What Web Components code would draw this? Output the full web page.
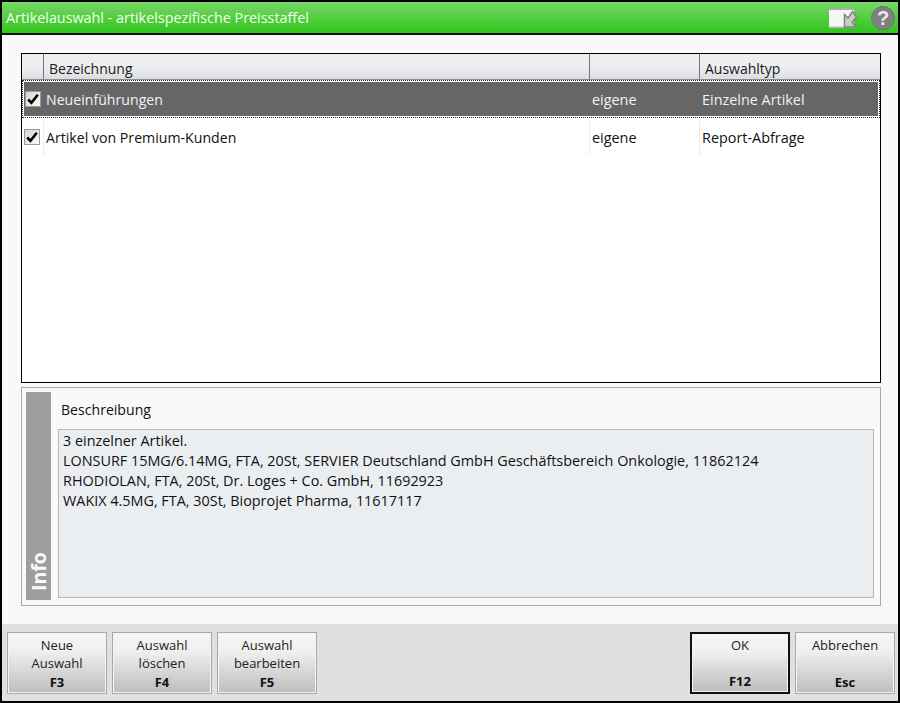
<!DOCTYPE html>
<html lang="de"><head><meta charset="utf-8"><style>
html,body{margin:0;padding:0;background:#f9f9f9}
body{font-family:"Open Sans","Noto Sans",sans-serif;width:900px;height:703px;overflow:hidden}
</style></head><body>
<app-window>
  <title-bar slot="title">Artikelauswahl - artikelspezifische Preisstaffel</title-bar>
  <select-table slot="table">
    <table-row selected name="Neueinführungen" owner="eigene" kind="Einzelne Artikel"></table-row>
    <table-row name="Artikel von Premium-Kunden" owner="eigene" kind="Report-Abfrage"></table-row>
  </select-table>
  <info-panel slot="info" heading="Beschreibung">
    <div>3 einzelner Artikel.</div>
    <div>LONSURF 15MG/6.14MG, FTA, 20St, SERVIER Deutschland GmbH Geschäftsbereich Onkologie, 11862124</div>
    <div>RHODIOLAN, FTA, 20St, Dr. Loges + Co. GmbH, 11692923</div>
    <div>WAKIX 4.5MG, FTA, 30St, Bioprojet Pharma, 11617117</div>
  </info-panel>
  <key-button slot="left" l1="Neue" l2="Auswahl" key="F3"></key-button>
  <key-button slot="left" l1="Auswahl" l2="löschen" key="F4"></key-button>
  <key-button slot="left" l1="Auswahl" l2="bearbeiten" key="F5"></key-button>
  <key-button slot="right" primary l1="OK" key="F12"></key-button>
  <key-button slot="right" l1="Abbrechen" key="Esc"></key-button>
</app-window>
<script>
function def(name,html){
  customElements.define(name,class extends HTMLElement{
    connectedCallback(){
      if(this.shadowRoot)return;
      const r=this.attachShadow({mode:'open'});
      r.innerHTML=typeof html==='function'?html(this):html;
    }
  });
}
def('app-window',`<style>
:host{display:flex;flex-direction:column;box-sizing:border-box;width:900px;height:703px;border:2px solid #000;background:#f9f9f9;color:#111;font-size:14px;line-height:20px}
.t{display:block;flex:none}
.main{flex:1;display:flex;flex-direction:column;padding:18px 17px 18px 19px;min-height:0}
.foot{flex:none;height:77px;box-sizing:border-box;background:#e0e0e0;padding:8px 3px 7px 5px;display:flex;justify-content:space-between}
.g{display:flex;gap:5px}
</style><div class="t"><slot name="title"></slot></div>
<div class="main"><slot name="table"></slot><slot name="info"></slot></div>
<div class="foot"><div class="g"><slot name="left"></slot></div><div class="g"><slot name="right"></slot></div></div>`);
def('title-bar',`<style>
:host{display:flex;align-items:center;justify-content:space-between;box-sizing:border-box;height:33px;padding:0 3px 0 4px;border-bottom:2px solid #111;background:linear-gradient(#78d968,#5fd04c 35%,#2fc51c);font-size:14.35px;color:#f2fff0}
.i{display:flex;align-items:center;gap:14px}
span{padding-top:1px}
</style><span><slot></slot></span><div class="i">
<svg width="28" height="20" viewBox="0 0 28 20"><rect x="0" y="0" width="25" height="20" fill="#f5f6f6"/><rect x="0" y="0" width="25" height="2" fill="#a9aea8"/><rect x="0" y="18.5" width="25" height="1.5" fill="#b4bab2"/><path d="M15.5 6.5V19H27L23 14.5 27.5 9 23.5 3.5 19 10Z" fill="#c6cfca" stroke="#7d8780" stroke-width="1.5"/></svg>
<svg width="24" height="24" viewBox="0 0 24 24"><circle cx="12" cy="12" r="11.5" fill="#808080" stroke="#666" stroke-dasharray="2 1"/><text x="12" y="19" text-anchor="middle" font-family="Liberation Sans" font-weight="700" font-size="20" fill="#eaeaea">?</text></svg>
</div>`);
def('select-table',`<style>
:host{display:flex;flex-direction:column;box-sizing:border-box;height:330px;border:1px solid #000;background:#fff;flex:none}
.h{display:grid;grid-template-columns:21px 546px 110px 1fr;height:26px;box-sizing:border-box;background:linear-gradient(#eceef1 55%,#dcdddf);border-bottom:1px solid #8c8c8c;color:#1a1a1a}
.h div{border-left:1px solid #777;padding:6px 0 0 5px;line-height:18px;box-sizing:border-box}
.h div:first-child{border:0}
</style><div class="h"><div></div><div>Bezeichnung</div><div></div><div>Auswahltyp</div></div><slot></slot>`);
def('table-row',e=>{const s=e.hasAttribute('selected');return `<style>
:host{display:block;height:38px;box-sizing:border-box;color:${s?'#eef2f6':'#111'};position:relative;font-size:14.15px}
.r{height:100%;box-sizing:border-box;display:grid;grid-template-columns:21px 546px 110px 1fr;align-items:center}
${s?'.f{position:absolute;inset:0;border:1px dotted #222;box-sizing:border-box}.r{background:#666;border:1px solid #fff;margin:1px;height:36px;grid-template-columns:20px 546px 110px 1fr}':''}
.c{border-left:1px solid ${s?'transparent':'#ececec'};height:${s?'100%':'36px'};display:flex;align-items:center;padding:2px 0 0 ${s?1:2}px;box-sizing:border-box}
.w{font-size:14.4px}
.b{width:16px;height:16px;margin-left:${s?'1px':'2px'};box-sizing:border-box;border:1px solid #9a9a9a;background:linear-gradient(135deg,#d4d4d4,#fafafa);display:block}
</style>${s?'<div class="f"></div>':''}<div class="r">
<div><svg class="b" viewBox="0 0 14 14"><path d="M2.2 7.5l3.2 3.2 6.4-8" fill="none" stroke="#000" stroke-width="2.6"/></svg></div>
<div class="c">${e.getAttribute('name')}</div><div class="c w">${e.getAttribute('owner')}</div><div class="c w">${e.getAttribute('kind')}</div></div>`});
def('info-panel',e=>`<style>
:host{display:grid;grid-template-columns:25px 1fr;gap:7px;box-sizing:border-box;height:219px;margin-top:4px;border:1px solid #aaa;padding:4px 6px 5px 4px;background:#f9f9f9;flex:none}
.s{background:#9e9e9e;display:flex;writing-mode:vertical-rl;transform:rotate(180deg);box-sizing:border-box;padding-top:9px;color:#fafafa;font:700 19.5px "Open Sans",sans-serif;align-items:center;justify-content:flex-start}
.m{display:flex;flex-direction:column;min-width:0}
.h{padding:8px 0 0 3px;height:37px;box-sizing:border-box;line-height:20px;font-size:14.1px}
.b{flex:1;margin-bottom:2px;border:1px solid #b8b8b8;background:#ebeef1;padding:1px 4px;line-height:20px;font-size:14.4px}
</style><div class="s">Info</div><div class="m"><div class="h">${e.getAttribute('heading')}</div><div class="b"><slot></slot></div></div>`);
def('key-button',e=>{const p=e.hasAttribute('primary');return `<style>
:host{display:flex;flex-direction:column;align-items:center;box-sizing:border-box;width:100px;height:62px;border:${p?'2px solid #111':'1px solid #a8a8a8'};background:linear-gradient(#f6f6f6,#f0f0f0 30%,#bdbdbd);box-shadow:inset 0 0 0 1px #f4f4f4;color:#222;font-size:13px;line-height:18px;padding-top:${p?'2px':'3px'}}
div{height:18px;text-align:center}
b{margin-top:auto;margin-bottom:2px;font-weight:700;color:#111;font-size:13px}
</style><div>${e.getAttribute('l1')}</div><div>${e.getAttribute('l2')||''}</div><b>${e.getAttribute('key')}</b>`});
</script></body></html>
